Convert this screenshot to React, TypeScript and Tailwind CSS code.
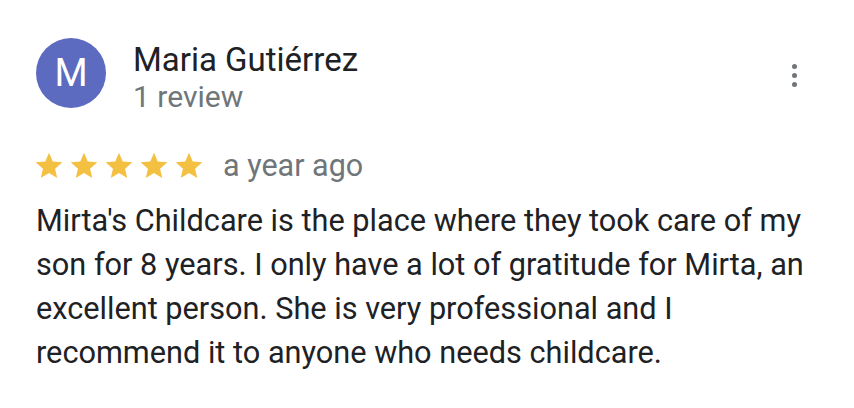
const Star = () => (
  <svg viewBox="0 0 24 24" className="h-[32px] w-[32px]" fill="#f4c042">
    <path d="M12 17.27L18.18 21l-1.64-7.03L22 9.24l-7.19-.61L12 2 9.19 8.63 2 9.24l5.46 4.73L5.82 21z" />
  </svg>
);

export default function App() {
  return (
    <main className="h-[408px] w-[854px] bg-white font-['Roboto',sans-serif]">
      <div className="px-9 pt-[38px]">
        <div className="flex items-start">
          <div className="flex h-[70px] w-[70px] shrink-0 items-center justify-center rounded-full bg-[#5c6bc0] text-[38px] text-white">
            M
          </div>
          <div className="ml-[27px] flex-1 pt-[2px]">
            <div className="text-[33px] leading-[40px] text-[#202124]">Maria Gutiérrez</div>
            <div className="text-[30px] leading-[33px] text-[#70757a]">1 review</div>
          </div>
          <div className="mr-[21px] mt-[26px] flex flex-col gap-[4px]">
            <span className="h-[5px] w-[5px] rounded-full bg-[#70757a]" />
            <span className="h-[5px] w-[5px] rounded-full bg-[#70757a]" />
            <span className="h-[5px] w-[5px] rounded-full bg-[#70757a]" />
          </div>
        </div>
        <div className="mt-[30px] flex items-center">
          <div className="-ml-[3px] flex gap-[3px]">
            <Star />
            <Star />
            <Star />
            <Star />
            <Star />
          </div>
          <span className="ml-[18px] text-[30.5px] text-[#70757a]">a year ago</span>
        </div>
        <p className="mt-[10px] w-[790px] text-[30.7px] leading-[44px] text-[#202124]">
          Mirta's Childcare is the place where they took care of my son for 8 years. I only have a lot of gratitude for Mirta, an excellent person. She is very professional and I recommend it to anyone who needs childcare.
        </p>
      </div>
    </main>
  );
}
